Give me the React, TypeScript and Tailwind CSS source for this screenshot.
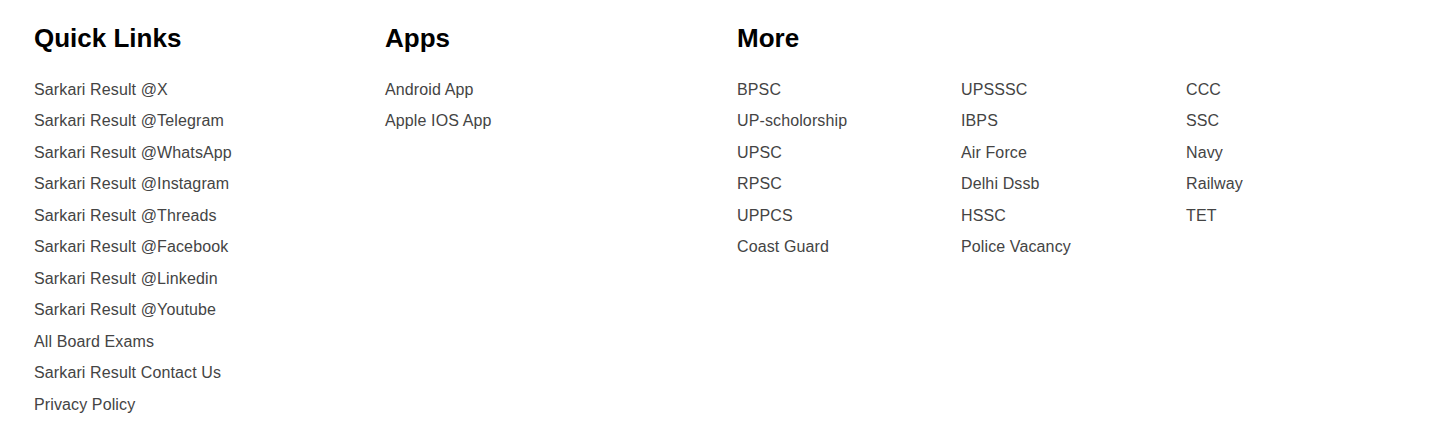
import React from "react";

const quick = [
  "Sarkari Result @X",
  "Sarkari Result @Telegram",
  "Sarkari Result @WhatsApp",
  "Sarkari Result @Instagram",
  "Sarkari Result @Threads",
  "Sarkari Result @Facebook",
  "Sarkari Result @Linkedin",
  "Sarkari Result @Youtube",
  "All Board Exams",
  "Sarkari Result Contact Us",
  "Privacy Policy",
];
const apps = ["Android App", "Apple IOS App"];
const more1 = ["BPSC", "UP-scholorship", "UPSC", "RPSC", "UPPCS", "Coast Guard"];
const more2 = ["UPSSSC", "IBPS", "Air Force", "Delhi Dssb", "HSSC", "Police Vacancy"];
const more3 = ["CCC", "SSC", "Navy", "Railway", "TET"];

function List({ items }: { items: string[] }) {
  return (
    <ul className="flex flex-col">
      {items.map((t) => (
        <li key={t} className="h-[31.5px] leading-[31.5px]">
          <a className="text-[16px] tracking-[0.12px] text-[#444444]" href="#">
            {t}
          </a>
        </li>
      ))}
    </ul>
  );
}

function Heading({ children }: { children: React.ReactNode }) {
  return (
    <h3 className="text-[26px] font-bold text-black leading-[31px] mb-[19.7px]">{children}</h3>
  );
}

export default function App() {
  return (
    <div
      className="w-[1442px] h-[427px] bg-white pl-[34px] pt-[23px] overflow-hidden"
      style={{ fontFamily: '"Liberation Sans", Arial, sans-serif' }}
    >
      <div className="grid grid-cols-[351px_352px_1fr]">
        <div>
          <Heading>Quick Links</Heading>
          <List items={quick} />
        </div>
        <div>
          <Heading>Apps</Heading>
          <List items={apps} />
        </div>
        <div>
          <Heading>More</Heading>
          <div className="grid grid-cols-[224px_225px_1fr]">
            <List items={more1} />
            <List items={more2} />
            <List items={more3} />
          </div>
        </div>
      </div>
    </div>
  );
}
